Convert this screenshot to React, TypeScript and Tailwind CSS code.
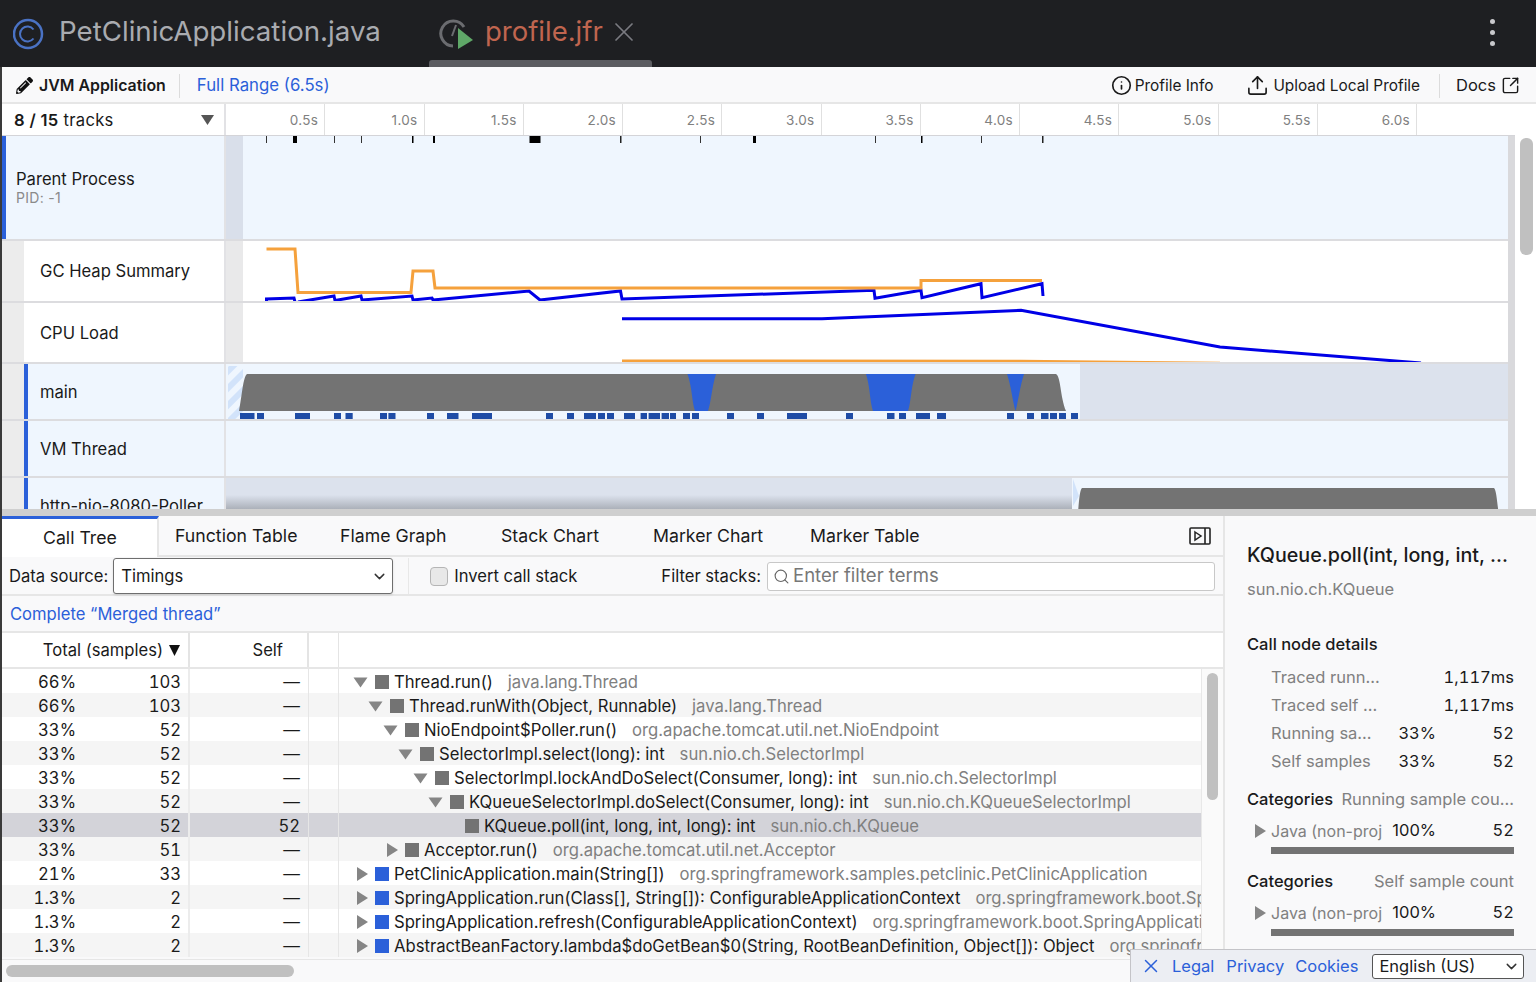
import { Fragment, ReactNode } from "react";
import { FaPencilAlt } from "react-icons/fa";
import { ChevronDown, Info, Search, SquareArrowOutUpRight, Upload, X } from "lucide-react";

const ticks: [number, number, string][] = [
  [266, 1, "#333"], [293, 4, "#000"], [334, 1, "#333"], [361, 1, "#333"], [412, 1.5, "#000"], [433, 2, "#000"],
  [529.5, 11, "#000"], [620, 1.5, "#222"], [700, 1, "#333"], [753, 3, "#000"], [875, 1, "#333"], [921, 1.5, "#000"], [981, 1, "#333"], [1042, 1.5, "#222"],
];
const marks: [number, number][] = [
  [240, 254.5], [257, 264], [295, 310], [334, 341], [345.5, 352.7], [380, 387], [388.4, 395.5], [427, 434], [447, 458.5], [472, 492],
  [546, 553], [567, 574], [584, 596], [598, 605], [607, 614], [624, 635], [640.6, 647], [648.6, 660], [661.6, 669], [670, 676],
  [683, 690], [692, 699], [727, 734], [757, 764], [787, 807], [846, 853], [887, 894.5], [899, 906], [916, 930], [937, 946],
  [1007, 1014], [1027, 1034], [1041, 1048.5], [1050, 1057], [1059, 1066], [1071, 1078],
];

type Node = { pct: string; n: string; self?: string; depth: number; t: "open" | "closed" | "none"; blue?: boolean; name: string; lib: string };
const nodes: Node[] = [
  { pct: "66%", n: "103", depth: 0, t: "open", name: "Thread.run()", lib: "java.lang.Thread" },
  { pct: "66%", n: "103", depth: 1, t: "open", name: "Thread.runWith(Object, Runnable)", lib: "java.lang.Thread" },
  { pct: "33%", n: "52", depth: 2, t: "open", name: "NioEndpoint$Poller.run()", lib: "org.apache.tomcat.util.net.NioEndpoint" },
  { pct: "33%", n: "52", depth: 3, t: "open", name: "SelectorImpl.select(long): int", lib: "sun.nio.ch.SelectorImpl" },
  { pct: "33%", n: "52", depth: 4, t: "open", name: "SelectorImpl.lockAndDoSelect(Consumer, long): int", lib: "sun.nio.ch.SelectorImpl" },
  { pct: "33%", n: "52", depth: 5, t: "open", name: "KQueueSelectorImpl.doSelect(Consumer, long): int", lib: "sun.nio.ch.KQueueSelectorImpl" },
  { pct: "33%", n: "52", self: "52", depth: 6, t: "none", name: "KQueue.poll(int, long, int, long): int", lib: "sun.nio.ch.KQueue" },
  { pct: "33%", n: "51", depth: 2, t: "closed", name: "Acceptor.run()", lib: "org.apache.tomcat.util.net.Acceptor" },
  { pct: "21%", n: "33", depth: 0, t: "closed", blue: true, name: "PetClinicApplication.main(String[])", lib: "org.springframework.samples.petclinic.PetClinicApplication" },
  { pct: "1.3%", n: "2", depth: 0, t: "closed", blue: true, name: "SpringApplication.run(Class[], String[]): ConfigurableApplicationContext", lib: "org.springframework.boot.SpringApplication" },
  { pct: "1.3%", n: "2", depth: 0, t: "closed", blue: true, name: "SpringApplication.refresh(ConfigurableApplicationContext)", lib: "org.springframework.boot.SpringApplication" },
  { pct: "1.3%", n: "2", depth: 0, t: "closed", blue: true, name: "AbstractBeanFactory.lambda$doGetBean$0(String, RootBeanDefinition, Object[]): Object", lib: "org.springframework.beans.factory.support.AbstractBeanFactory" },
];

function Track({ h, label, sub, indent, active, bg, children }: { h: string; label: string; sub?: string; indent?: boolean; active?: boolean; bg?: boolean; children: ReactNode }) {
  return (
    <div className={`flex shrink-0 border-b-2 border-[#dcdcdf] ${h}`}>
      {indent && <div className="w-[22px] shrink-0 bg-[#ececec]" />}
      <div className={`flex shrink-0 flex-col justify-center border-r-2 border-[#e2e2e5] ${indent ? "w-[202px]" : "w-[224px]"} ${active ? "border-l-4 border-l-[#2b60d9]" : ""} ${bg ? "bg-[#eff6fe]" : "bg-white"}`}>
        <div className={active ? (indent ? "pl-[12px]" : "pl-[10px]") : "pl-[16px]"}>
          <div className="whitespace-nowrap text-[16.6px] leading-[20px] text-[#1a1a1a]">{label}</div>
          {sub && <div className="text-[14px] leading-[17px] tracking-[0.3px] text-[#8a8a8a]">{sub}</div>}
        </div>
      </div>
      <div className="min-w-0 flex-1 overflow-hidden">{children}</div>
    </div>
  );
}

function Lane({ top, height, children }: { top: number; height: number; children: ReactNode }) {
  return (
    <svg width={1282} height={height} viewBox={`226 ${top} 1282 ${height}`} className="block">
      {children}
    </svg>
  );
}

function Caret({ kind }: { kind: "open" | "closed" }) {
  return kind === "open" ? (
    <svg width="15" height="11" viewBox="0 0 15 11"><path d="M0.5 0.5H14.5L7.5 10.5Z" fill="#858585" /></svg>
  ) : (
    <svg width="11" height="14" viewBox="0 0 11 14"><path d="M0 0L11 7L0 14Z" fill="#858585" /></svg>
  );
}

function TreeRow({ node, i }: { node: Node; i: number }) {
  const selected = node.self !== undefined;
  const bg = selected ? "bg-[#d3d3d9]" : i % 2 ? "bg-[#f5f5f5]" : "bg-white";
  return (
    <div className={`flex h-6 items-center text-[16.65px] text-[#1a1a1a] ${bg}`}>
      <div className="flex h-full w-[188px] shrink-0 items-center border-r-2 border-[#ececec] pt-[2px] tabular-nums">
        <span className="w-[74px] text-right">{node.pct}</span>
        <span className="w-[105px] text-right">{node.n}</span>
      </div>
      <div className="flex h-full w-[119px] shrink-0 items-center justify-end border-r border-[#e6e6e6] pr-[8px] pt-[2px] tabular-nums">{node.self ?? "—"}</div>
      <div className="h-full w-[30px] shrink-0 border-r border-[#e6e6e6]" />
      <div className="flex h-full min-w-0 flex-1 items-center overflow-hidden whitespace-nowrap pl-[14px] pt-[2px]">
        <div className="flex shrink-0 items-center" style={{ marginLeft: node.depth * 15 }}>
          <span className="flex w-[22px] shrink-0 justify-start">
            {node.t === "open" && <Caret kind="open" />}
            {node.t === "closed" && <span className="pl-[4px]"><Caret kind="closed" /></span>}
          </span>
          <span className={`mr-[5px] h-[14px] w-[14px] shrink-0 ${node.blue ? "bg-[#2b60d9]" : "bg-[#737373]"}`} />
          <span>{node.name}</span>
          <span className="ml-[15px] text-[#808080]">{node.lib}</span>
        </div>
      </div>
    </div>
  );
}

function Stat({ label, pct, value }: { label: string; pct?: string; value: string }) {
  return (
    <div className="flex h-[27.7px] items-center pl-[24px]">
      <span className="w-[100px] shrink-0 whitespace-nowrap text-[#808080]">{label}</span>
      <span className="w-[65px] shrink-0 text-right tabular-nums">{pct}</span>
      <span className="flex-1 text-right tabular-nums">{value}</span>
    </div>
  );
}

function Category() {
  return (
    <>
      <div className="flex h-[24px] items-center">
        <span className="w-[24px] shrink-0 pl-[8px]"><Caret kind="closed" /></span>
        <span className="w-[111px] shrink-0 overflow-hidden whitespace-nowrap text-[16px] text-[#808080]">Java (non-project)</span>
        <span className="w-[54px] shrink-0 text-right">100%</span>
        <span className="flex-1 text-right tabular-nums">52</span>
      </div>
      <div className="ml-[24px] mt-[4px] h-[7px] bg-[#737373]" />
    </>
  );
}

export default function App() {
  return (
    <div className="relative flex h-[982px] w-[1536px] flex-col overflow-hidden bg-white font-['Inter',sans-serif]">
      {/* IDE tab bar */}
      <div className="flex h-[67px] shrink-0 items-center bg-[#1e1f22]">
        <svg className="ml-[13px]" width="31" height="32" viewBox="0 0 31 32" fill="none">
          <circle cx="15" cy="16" r="14" stroke="#4a72c4" strokeWidth="2.5" />
          <path d="M20.5 11.5A7.5 7.5 0 1 0 20.5 20.5" stroke="#4a72c4" strokeWidth="2" />
        </svg>
        <span className="ml-[15px] pb-[3px] text-[27.7px] text-[#a9abb0]">PetClinicApplication.java</span>
        <div className="relative ml-[48px] flex h-full w-[223px] items-center pl-[10px]">
          <svg width="36" height="36" viewBox="0 0 36 36" fill="none">
            <path d="M14 30A12.5 12.5 0 1 1 25 11" stroke="#6b6c70" strokeWidth="3" />
            <path d="M13 20L17 9" stroke="#6b6c70" strokeWidth="2" />
            <path d="M19 12L34 24L19 33Z" fill="#5fa868" />
          </svg>
          <span className="ml-[10px] pb-[3px] text-[27.5px] text-[#c0654f]">profile.jfr</span>
          <X className="ml-[5px] mb-[3px] text-[#7a7b80]" size={32} strokeWidth={1.3} />
          <div className="absolute bottom-0 left-0 h-[7px] w-full rounded-t-[3px] bg-[#5b5c60]" />
        </div>
        <div className="ml-auto mb-[3px] mr-[41px] flex flex-col gap-[6px]">
          <span className="h-[5px] w-[5px] rounded-full bg-[#c8c8cc]" />
          <span className="h-[5px] w-[5px] rounded-full bg-[#c8c8cc]" />
          <span className="h-[5px] w-[5px] rounded-full bg-[#c8c8cc]" />
        </div>
      </div>

      <div className="flex min-h-0 flex-1 flex-col border-l-2 border-[#3a3a3a]">
        {/* Toolbar */}
        <div className="flex h-[37px] shrink-0 items-center border-b-2 border-[#e6e6e6] bg-[#f9f9fa] pt-[2px] text-[15.4px] text-[#1a1a1a]">
          <FaPencilAlt className="ml-[14px] text-[#111]" size={17} />
          <span className="ml-[6px] text-[15.9px] font-semibold">JVM Application</span>
          <span className="ml-[13px] h-[24px] w-px bg-[#dcdcdc]" />
          <span className="ml-[17px] text-[16.8px] text-[#2b60d9]">Full Range (6.5s)</span>
          <Info className="ml-auto" size={21} strokeWidth={1.9} />
          <span className="ml-[3px]">Profile Info</span>
          <Upload className="ml-[33px]" size={23} strokeWidth={1.7} />
          <span className="ml-[4px]">Upload Local Profile</span>
          <span className="ml-[19px] h-[24px] w-px bg-[#dcdcdc]" />
          <span className="ml-[16px] text-[16.5px]">Docs</span>
          <SquareArrowOutUpRight className="ml-[5px] mr-[16px]" size={19} strokeWidth={1.8} />
        </div>

        {/* Tracks */}
        <div className="flex h-[405px] shrink-0">
          <div className="flex min-w-0 flex-1 flex-col overflow-hidden">
            <div className="flex h-[32px] shrink-0 items-center border-b border-[#d4d4d8] bg-white">
              <div className="flex h-full w-[224px] shrink-0 items-center border-r-2 border-[#e2e2e5] pl-[12px] pt-[1px] text-[16.6px] tracking-[0.3px] text-[#1a1a1a]">
                <span><b className="font-semibold">8 / 15</b> tracks</span>
                <svg className="ml-auto mr-[10px]" width="13" height="10" viewBox="0 0 13 10"><path d="M0 0H13L6.5 10Z" fill="#555" /></svg>
              </div>
              {["0.5s", "1.0s", "1.5s", "2.0s", "2.5s", "3.0s", "3.5s", "4.0s", "4.5s", "5.0s", "5.5s", "6.0s"].map((t) => (
                <div key={t} className="flex h-full w-[99.25px] shrink-0 items-center justify-end border-r border-[#e0e0e0] pr-[6px] pt-[1px] text-[13.5px] tracking-[0.3px] text-[#808080]">{t}</div>
              ))}
            </div>
            <div className="bg-[#d9d9dc] pr-[7px]">
              <Track h="h-[105px]" label="Parent Process" sub="PID: -1" active bg>
                <Lane top={136} height={103}>
                  <rect x="226" y="136" width="1282" height="103" fill="#eff6fe" />
                  <rect x="226" y="136" width="17" height="103" fill="#d9dfea" />
                  {ticks.map(([x, w, c]) => <rect key={x} x={x} y="136" width={w} height="7" fill={c} />)}
                </Lane>
              </Track>
              <Track h="h-[62px]" label="GC Heap Summary" indent>
                <Lane top={240} height={60}>
                  <rect x="226" y="240" width="1282" height="60" fill="#fff" />
                  <rect x="226" y="240" width="17" height="60" fill="#e9e9ea" />
                  <path d="M266.5 301L266.5 298L294 297L295 301M298 301L334 295L335 299.5L361 295L362 299L412 295L413 299L432 297L433 299L529 290L540 299L620.5 290L622 298L874 289.3L875 297.3L921 289.3L922 296.7L981 282.7L982 296.7L1042 282.7L1043 295" fill="none" stroke="#0000e6" strokeWidth="3" />
                  <path d="M266.5 248L295 248L298 291.5L411 291.5L413 270L433 270L435 287L921 287L921 279.5L1042 279.5" fill="none" stroke="#f5a13c" strokeWidth="3" />
                </Lane>
              </Track>
              <Track h="h-[61px]" label="CPU Load" indent>
                <Lane top={302} height={59}>
                  <rect x="226" y="302" width="1282" height="59" fill="#fff" />
                  <rect x="226" y="302" width="17" height="59" fill="#e9e9ea" />
                  <path d="M622 317.7L822 317.7L1021 309.3L1220 346L1421 362" fill="none" stroke="#0000e6" strokeWidth="3" />
                  <path d="M622 359.7L1021 360L1220 362" fill="none" stroke="#f5a13c" strokeWidth="2.5" />
                </Lane>
              </Track>
              <Track h="h-[57px]" label="main" indent active bg>
                <Lane top={363} height={55}>
                  <defs>
                    <pattern id="hatch" width="12" height="12" patternUnits="userSpaceOnUse" patternTransform="rotate(45)">
                      <rect width="12" height="12" fill="#eff6fe" />
                      <rect width="6" height="12" fill="#d2e3fa" />
                    </pattern>
                  </defs>
                  <rect x="226" y="363" width="854" height="55" fill="#eff6fe" />
                  <rect x="1080" y="363" width="428" height="55" fill="#dce2ed" />
                  <rect x="228" y="365" width="15" height="53" fill="url(#hatch)" />
                  <path d="M239 410C242 395 243 376 247 373L1056 373C1061 376 1060 395 1066 410Z" fill="#737373" />
                  <path d="M687.5 373L716 373C712 385 711 402 708 410L695 410C692 402 692 385 687.5 373Z" fill="#2b60d9" />
                  <path d="M866 373L915.5 373C911 385 911 402 908 410L873 410C870 402 870 385 866 373Z" fill="#2b60d9" />
                  <path d="M1007 373L1024 373C1020 385 1018 402 1015.5 410C1013 402 1011 385 1007 373Z" fill="#2b60d9" />
                  {marks.map(([a, b]) => <rect key={a} x={a} y="412" width={b - a} height="6.5" fill="#1e4ca6" />)}
                </Lane>
              </Track>
              <Track h="h-[57px]" label="VM Thread" indent active bg>
                <Lane top={420} height={55}>
                  <rect x="226" y="420" width="1282" height="55" fill="#eff6fe" />
                </Lane>
              </Track>
              <Track h="h-[57px]" label="http-nio-8080-Poller" indent active bg>
                <Lane top={477} height={55}>
                  <defs>
                    <linearGradient id="fade" x1="0" y1="0" x2="0" y2="1">
                      <stop offset="0" stopColor="#dce2ed" />
                      <stop offset="1" stopColor="#a8adb6" />
                    </linearGradient>
                  </defs>
                  <rect x="226" y="477" width="846" height="32" fill="#dce2ed" />
                  <rect x="226" y="494" width="846" height="15" fill="url(#fade)" />
                  <rect x="1072" y="477" width="436" height="32" fill="#eff6fe" />
                  <path d="M1073 505L1073 478L1079 495Z" fill="#d2e3fa" />
                  <path d="M1077 520C1079 505 1079 490 1082 487L1494 487C1497 490 1497 505 1500 520Z" fill="#737373" />
                </Lane>
              </Track>
            </div>
          </div>
          <div className="w-[21px] shrink-0 bg-white pl-[5px] pt-[34px]">
            <div className="h-[117px] w-[13px] rounded-[6px] bg-[#c0c0c0]" />
          </div>
        </div>

        {/* Splitter */}
        <div className="h-[7px] shrink-0 bg-[#cfcfcf]" />

        {/* Bottom panel */}
        <div className="flex min-h-0 flex-1">
          <div className="flex w-[1221px] shrink-0 flex-col bg-[#f9f9fa]">
            {/* Tabs */}
            <div className="flex h-[41px] shrink-0 border-b-2 border-[#e6e6e6] pt-[1px] text-[17.7px] text-[#1a1a1a]">
              <div className="-mb-[2px] -mt-[1px] flex h-[41px] w-[157px] shrink-0 items-center border-r-2 border-t-[3px] border-[#e6e6e6] border-t-[#2b60d9] bg-white pl-[41px]">Call Tree</div>
              <div className="flex w-[165px] items-center pl-[16px]">Function Table</div>
              <div className="flex w-[161px] items-center pl-[16px]">Flame Graph</div>
              <div className="flex w-[152px] items-center pl-[16px]">Stack Chart</div>
              <div className="flex w-[158px] items-center pl-[16px]">Marker Chart</div>
              <div className="flex items-center pl-[15px]">Marker Table</div>
              <svg className="my-auto ml-auto mr-[12px]" width="22" height="18" viewBox="0 0 22 18" fill="none">
                <rect x="1" y="1" width="20" height="16" rx="1" stroke="#222" strokeWidth="1.6" />
                <path d="M16 1V17" stroke="#222" strokeWidth="1.6" />
                <path d="M6 5L12 9L6 13Z" stroke="#222" strokeWidth="1.5" />
              </svg>
            </div>
            {/* Settings */}
            <div className="flex h-[39px] shrink-0 items-center border-b-2 border-[#e6e6e6] pt-[1px] text-[16.6px] text-[#1a1a1a]">
              <span className="ml-[7px]">Data source:</span>
              <div className="ml-[5px] flex h-[36px] w-[280px] items-center justify-between rounded-[3px] border border-[#6e6e6e] bg-white pl-[7px] pr-[4px] shadow-sm">
                <span>Timings</span>
                <ChevronDown size={17} className="text-[#333]" />
              </div>
              <span className="ml-[15px] h-full w-px bg-[#e8e8e8]" />
              <span className="ml-[21px] h-[19px] w-[18px] rounded-[4px] border border-[#b5b5b5] bg-[#e8e8e8]" />
              <span className="ml-[6px]">Invert call stack</span>
              <span className="ml-[84px]">Filter stacks:</span>
              <div className="ml-[6px] mr-[8px] flex h-[29px] flex-1 items-center rounded-[3px] border border-[#c8c8c8] bg-white pl-[5px]">
                <Search size={17} className="text-[#666]" strokeWidth={1.6} />
                <span className="ml-[3px] text-[18.5px] text-[#777]">Enter filter terms</span>
              </div>
            </div>
            {/* Breadcrumb */}
            <div className="flex h-[37px] shrink-0 items-center border-b-2 border-[#e6e6e6] pl-[8px] pt-[1px] text-[16.6px] text-[#2b60d9]">Complete “Merged thread”</div>
            {/* Header */}
            <div className="flex h-[36px] shrink-0 border-b-2 border-[#e6e6e6] bg-white text-[16.6px] text-[#1a1a1a]">
              <div className="flex w-[188px] shrink-0 items-center justify-end border-r-2 border-[#e4e4e4] pr-[8px]">Total (samples)<svg className="ml-[6px]" width="11" height="11" viewBox="0 0 11 11"><path d="M0 0H11L5.5 11Z" fill="#111" /></svg></div>
              <div className="flex w-[119px] shrink-0 items-center justify-end border-r-2 border-[#e4e4e4] pr-[24px]">Self</div>
              <div className="w-[30px] shrink-0 border-r border-[#e4e4e4]" />
            </div>
            {/* Tree */}
            <div className="flex h-[291px] shrink-0 overflow-hidden border-b border-[#e6e6e6]">
              <div className="min-w-0 flex-1">
                {nodes.map((n, i) => <Fragment key={n.name}><TreeRow node={n} i={i} /></Fragment>)}
              </div>
              <div className="w-[22px] shrink-0 border-l border-[#e8e8e8] bg-[#fafafa] pl-[5px] pt-[4px]">
                <div className="h-[127px] w-[11px] rounded-[6px] bg-[#c0c0c0]" />
              </div>
            </div>
            <div className="flex-1 pl-[4px] pt-[5px]">
              <div className="h-[12px] w-[288px] rounded-[6px] bg-[#c0c0c0]" />
            </div>
          </div>

          {/* Sidebar */}
          <div className="min-w-0 flex-1 border-l-2 border-[#e6e6e6] bg-[#f9f9fa] pl-[22px] pr-[22px] text-[16.5px] text-[#1a1a1a]">
            <div className="mt-[26px] whitespace-nowrap text-[19.7px] font-medium leading-[26px]">KQueue.poll(int, long, int, ...</div>
            <div className="mt-[10px] leading-[22px] text-[#808080]">sun.nio.ch.KQueue</div>
            <div className="mt-[33px] font-medium leading-[22px]">Call node details</div>
            <div className="mt-[9px]">
              <Stat label="Traced runn..." value="1,117ms" />
              <Stat label="Traced self ..." value="1,117ms" />
              <Stat label="Running sa..." pct="33%" value="52" />
              <Stat label="Self samples" pct="33%" value="52" />
            </div>
            <div className="mt-[14px] flex h-[22px] items-center justify-between whitespace-nowrap">
              <span className="font-medium">Categories</span>
              <span className="text-[#808080]">Running sample cou...</span>
            </div>
            <div className="mt-[8px]"><Category /></div>
            <div className="mt-[17px] flex h-[22px] items-center justify-between whitespace-nowrap">
              <span className="font-medium">Categories</span>
              <span className="text-[#808080]">Self sample count</span>
            </div>
            <div className="mt-[8px]"><Category /></div>
          </div>
        </div>
      </div>

      {/* Footer links */}
      <div className="absolute bottom-0 right-0 flex h-[33px] w-[406px] items-center border-l border-t border-[#c4c4c8] bg-[#eceef3] pl-[9px] text-[16.5px] text-[#2b60d9]">
        <X size={22} strokeWidth={1.6} />
        <span className="ml-[10px]">Legal</span>
        <span className="ml-[12px]">Privacy</span>
        <span className="ml-[11px]">Cookies</span>
        <div className="ml-[14px] flex h-[25px] w-[152px] items-center justify-between rounded-[3px] border border-[#555] bg-white pl-[6px] pr-[3px] text-[#1a1a1a]">
          <span>English (US)</span>
          <ChevronDown size={17} className="text-[#333]" />
        </div>
      </div>
    </div>
  );
}
